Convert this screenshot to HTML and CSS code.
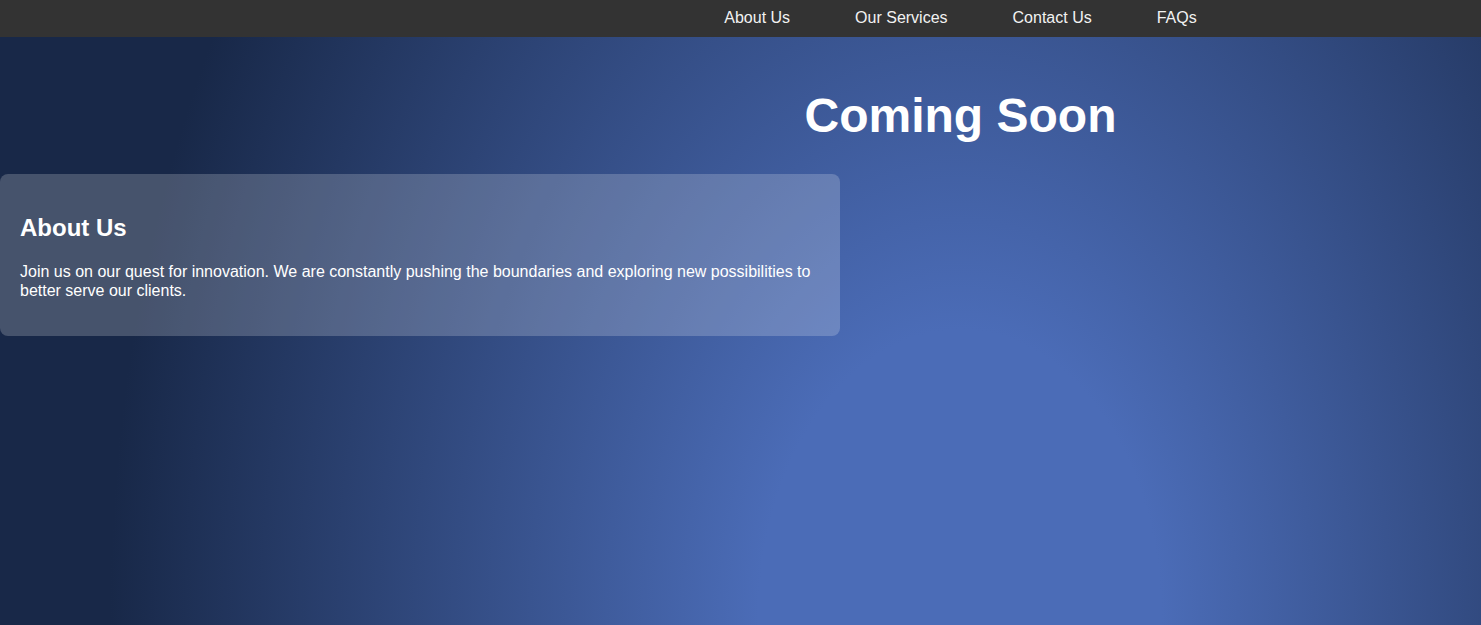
FILE: index.html
```html
<!DOCTYPE html>
<html lang="en">
<head>
<meta charset="utf-8">
<title>Coming Soon</title>
<link rel="stylesheet" href="styles.css">
</head>
<body>
  <header class="topnav">
    <nav class="topnav-links">
      <a href="#about">About Us</a>
      <a href="#services">Our Services</a>
      <a href="#contact">Contact Us</a>
      <a href="#faqs">FAQs</a>
    </nav>
  </header>
  <main class="page">
    <section class="hero">
      <h1 class="hero-title">Coming Soon</h1>
    </section>
    <section class="card" id="about">
      <h2 class="card-title">About Us</h2>
      <p class="card-text">Join us on our quest for innovation. We are constantly pushing the boundaries and exploring new possibilities to better serve our clients.</p>
    </section>
  </main>
</body>
</html>
```

FILE: styles.css
```css
html, body {
  margin: 0;
  padding: 0;
  height: 100%;
}

body {
  font-family: "Liberation Sans", Arial, sans-serif;
  color: #fff;
  background-color: #182848;
  background-image: radial-gradient(ellipse 850px 1224px at 960px 620px, #4b6cb7 23.7%, #182848 100%);
  background-repeat: no-repeat;
}

.topnav {
  display: grid;
  grid-template-columns: 440px 1fr;
  height: 37px;
  background: #333;
}

.topnav-links {
  grid-column: 2;
  display: flex;
  justify-content: center;
  align-items: center;
  gap: 65px;
}

.topnav-links a {
  color: #f2f2f2;
  text-decoration: none;
  font-size: 16px;
  line-height: 18px;
  padding-bottom: 1px;
}

.page {
  display: flex;
  flex-direction: column;
}

.hero {
  display: grid;
  grid-template-columns: 440px 1fr;
  padding-top: 51px;
}

.hero-title {
  grid-column: 2;
  margin: 0 0 31px;
  text-align: center;
  font-size: 48px;
  font-weight: bold;
  line-height: 55px;
}

.card {
  box-sizing: border-box;
  width: 840px;
  padding: 20px;
  border-radius: 8px;
  background: rgba(255, 255, 255, 0.2);
}

.card-title {
  margin: 20px 0;
  font-size: 24px;
  font-weight: bold;
  line-height: 27.6px;
}

.card-text {
  margin: 16px 0;
  font-size: 16px;
  line-height: 19.2px;
}
```
